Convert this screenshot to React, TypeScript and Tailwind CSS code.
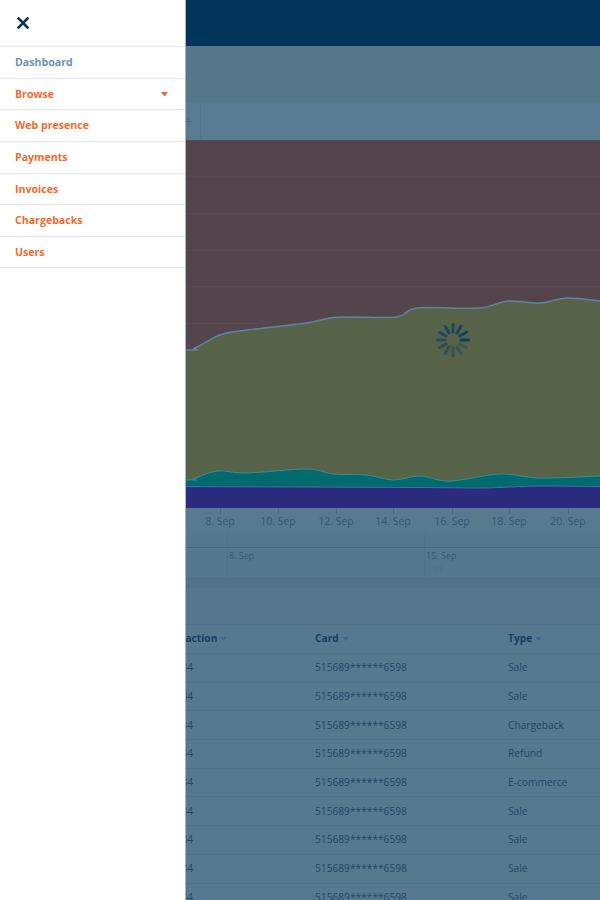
import React from "react";

type P = [number, number];

function smooth(pts: P[]): string {
  let d = `M${pts[0][0]},${pts[0][1]}`;
  for (let i = 0; i < pts.length - 1; i++) {
    const p0 = pts[i - 1] || pts[i];
    const p1 = pts[i];
    const p2 = pts[i + 1];
    const p3 = pts[i + 2] || p2;
    const c1x = p1[0] + (p2[0] - p0[0]) / 6;
    const c1y = p1[1] + (p2[1] - p0[1]) / 6;
    const c2x = p2[0] - (p3[0] - p1[0]) / 6;
    const c2y = p2[1] - (p3[1] - p1[1]) / 6;
    d += ` C${c1x},${c1y} ${c2x},${c2y} ${p2[0]},${p2[1]}`;
  }
  return d;
}

const greenTop: P[] = [
  [0, 212], [180, 210], [195, 208], [220, 195], [247, 190], [307, 183], [330, 178], [353, 177],
  [397, 177], [417, 168], [480, 168], [507, 161], [540, 163], [567, 158], [600, 161],
];
const tealTop: P[] = [
  [0, 340], [180, 340], [193, 339], [217, 331], [247, 333], [307, 329], [333, 334], [367, 335],
  [393, 340], [420, 336], [450, 341], [500, 334], [540, 338], [600, 336],
];
const blueTop: P[] = [[0, 346], [150, 346.5], [300, 347], [420, 347.5], [480, 348], [510, 347], [540, 346], [600, 346.5]];

function Chart() {
  const g = smooth(greenTop);
  const t = smooth(tealTop);
  const b = smooth(blueTop);
  const grid = [36.7, 73.4, 110, 146.7, 183.4, 220, 256.8, 293.5, 330];
  return (
    <svg width="600" height="368" viewBox="0 0 600 368" className="block">
      <rect x="0" y="0" width="600" height="368" fill="#53454b" />
      {grid.map((y) => (
        <line key={y} x1="0" x2="600" y1={y} y2={y} stroke="#5a4c54" strokeWidth="1" />
      ))}
      <path d={`${g} L600,368 L0,368 Z`} fill="#566349" />
      <path d={`${t} L600,368 L0,368 Z`} fill="#016a6f" />
      <path d={`${b} L600,368 L0,368 Z`} fill="#2b2b80" />
      <path d={g} fill="none" stroke="#5e84a0" strokeWidth="1.5" />
      <path d={t} fill="none" stroke="#3f8a94" strokeWidth="1" />
      <path d={b} fill="none" stroke="#4a6ea0" strokeWidth="1" />
      <line x1="0" x2="600" y1="0.5" y2="0.5" stroke="#4c4b5a" />
    </svg>
  );
}

function Spinner() {
  const segs = Array.from({ length: 12 }, (_, i) => i);
  return (
    <svg width="36" height="36" viewBox="-18 -18 36 36">
      {segs.map((i) => {
        const a = (i * 30 * Math.PI) / 180;
        const x1 = Math.sin(a) * 8;
        const y1 = -Math.cos(a) * 8;
        const x2 = Math.sin(a) * 15.5;
        const y2 = -Math.cos(a) * 15.5;
        const rank = (i - 4 + 12) % 12;
        const op = 0.35 + (rank / 11) * 0.6;
        return (
          <line key={i} x1={x1} y1={y1} x2={x2} y2={y2} stroke="#0b3d62" strokeWidth="3" strokeLinecap="round" opacity={op} />
        );
      })}
    </svg>
  );
}

const axisLabels = [
  { x: 220, t: "8. Sep" },
  { x: 278, t: "10. Sep" },
  { x: 336, t: "12. Sep" },
  { x: 393, t: "14. Sep" },
  { x: 452, t: "16. Sep" },
  { x: 509, t: "18. Sep" },
  { x: 568, t: "20. Sep" },
  { x: 162, t: "6. Sep" },
];

const types = ["Sale", "Sale", "Chargeback", "Refund", "E-commerce", "Sale", "Sale", "Sale", "Sale"];

const menu = ["Dashboard", "Browse", "Web presence", "Payments", "Invoices", "Chargebacks", "Users"];

export default function App() {
  return (
    <div className="relative w-[600px] h-[900px] overflow-hidden bg-[#577990]" style={{ fontFamily: "'Open Sans', 'Liberation Sans', sans-serif" }}>
      {/* background page */}
      <div className="flex flex-col">
        <div className="h-[46px] bg-[#003459]" />
        <div className="h-[57px] bg-[#56768a]" />
        <div className="h-[37px] bg-[#587b91] flex items-center">
          <div className="w-[201px] h-full border-r border-[#54748b] flex items-center justify-end pr-[8px]">
            <span className="text-[14px] text-[#4b6a80] leading-none">+</span>
          </div>
        </div>
        <div className="relative h-[368px]">
          <Chart />
          <div className="absolute left-[435px] top-[182px]">
            <Spinner />
          </div>
        </div>
        {/* x axis */}
        <div className="relative h-[25px] bg-[#587a91]">
          {axisLabels.map((l) => (
            <React.Fragment key={l.t}>
              <div className="absolute top-0 w-px h-[6px] bg-[#46697f]" style={{ left: l.x }} />
              <div className="absolute top-[6px] -translate-x-1/2 text-[10.5px] leading-[14px] text-[#2d5676] whitespace-nowrap" style={{ left: l.x }}>
                {l.t}
              </div>
            </React.Fragment>
          ))}
        </div>
        {/* navigator */}
        <div className="relative h-[44px] bg-[#56788f]">
          <div className="absolute left-[227px] top-0 w-px h-[44px] bg-[#52728a]" />
          <div className="absolute left-[424px] top-0 w-px h-[44px] bg-[#52728a]" />
          <div className="absolute left-0 right-0 top-[14px] h-px bg-[#3f6787]" />
          <div className="absolute left-[229px] top-[17px] text-[9px] leading-[12px] text-[#2f587a]">8. Sep</div>
          <div className="absolute left-[426px] top-[17px] text-[9px] leading-[12px] text-[#2f587a]">15. Sep</div>
          <div className="absolute left-[434px] top-[32px] text-[7px] leading-[8px] text-[#45698a] tracking-[1px]">III</div>
        </div>
        <div className="h-[11px] bg-[#52728a]" />
        <div className="h-[37px] bg-[#56778d] border-b border-[#52718a]" />
        {/* table */}
        <div className="text-[10.2px] text-[#1d4767]">
          <div className="h-[29px] flex items-center border-b border-[#52718a] font-bold text-[#153f61]">
            <div className="w-[157px] pl-[15px]">Date</div>
            <div className="w-[158px] flex items-center gap-[3px]">Transaction<Caret /></div>
            <div className="w-[193px] flex items-center gap-[3px]">Card<Caret /></div>
            <div className="flex-1 flex items-center gap-[3px]">Type<Caret /></div>
          </div>
          {types.map((t, i) => (
            <div key={i} className="h-[28.7px] flex items-center border-b border-[#52718a]">
              <div className="w-[159px] pl-[15px]">2017-09-21</div>
              <div className="w-[156px] pl-[5px]">10034</div>
              <div className="w-[193px]">515689******6598</div>
              <div className="flex-1">{t}</div>
            </div>
          ))}
        </div>
      </div>

      {/* sidebar */}
      <div className="absolute left-0 top-0 w-[186px] h-[900px] bg-white border-r border-[#a9b6bf]">
        <div className="h-[46px] flex items-center pl-[17px]">
          <svg width="12" height="12" viewBox="0 0 12 12">
            <path d="M1.5 1.5 L10.5 10.5 M10.5 1.5 L1.5 10.5" stroke="#0b3453" strokeWidth="2.6" strokeLinecap="square" />
          </svg>
        </div>
        <div className="flex flex-col">
          {menu.map((m, i) => (
            <div
              key={m}
              className={`h-[31.7px] border-t border-[#e6e6e6] flex items-center justify-between pl-[15px] pr-[17px] pt-[1px] text-[10.6px] font-bold ${i === 0 ? "text-[#6f93aa]" : "text-[#f26a2c]"} ${i === menu.length - 1 ? "border-b" : ""}`}
            >
              <span>{m}</span>
              {m === "Browse" && (
                <svg width="7" height="5" viewBox="0 0 7 5">
                  <path d="M0 0 L7 0 L3.5 4.5 Z" fill="#f26a2c" />
                </svg>
              )}
            </div>
          ))}
        </div>
      </div>
    </div>
  );
}

function Caret() {
  return (
    <svg width="7" height="4" viewBox="0 0 7 4">
      <path d="M0 0 L7 0 L3.5 4 Z" fill="#3c6a8e" />
    </svg>
  );
}
